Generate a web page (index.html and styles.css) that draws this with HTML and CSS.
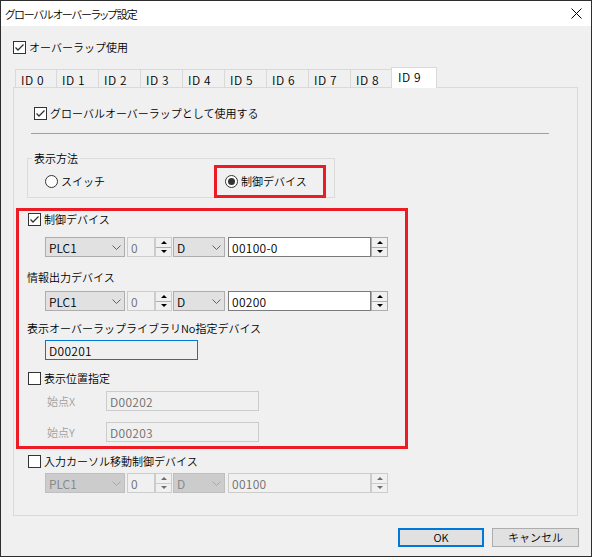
FILE: index.html
```html
<!DOCTYPE html>
<html lang="ja">
<head>
<meta charset="utf-8">
<title>グローバルオーバーラップ設定</title>
<link rel="stylesheet" href="styles.css">
</head>
<body>
<div class="window">
  <div class="titlebar">
    <span class="title">グローバルオーバーラップ設定</span>
    <svg class="close" width="11" height="11" viewBox="0 0 11 11"><path d="M0.5 0.5 L10.5 10.5 M10.5 0.5 L0.5 10.5" stroke="#000" stroke-width="1" fill="none"/></svg>
  </div>
  <div class="client">
    <div class="check top-check"><span class="box"><svg width="11" height="11" viewBox="0 0 11 11"><path d="M1.5 5.5 L4 8 L9.5 2.5" fill="none" stroke="#333" stroke-width="1.3"/></svg></span><span>オーバーラップ使用</span></div>
    <div class="tabs">
      <span class="tab">ID 0</span>
      <span class="tab">ID 1</span>
      <span class="tab">ID 2</span>
      <span class="tab">ID 3</span>
      <span class="tab">ID 4</span>
      <span class="tab">ID 5</span>
      <span class="tab">ID 6</span>
      <span class="tab">ID 7</span>
      <span class="tab">ID 8</span>
      <span class="tab active">ID 9</span>
    </div>
    <div class="panel">
      <div class="check g-check"><span class="box"><svg width="11" height="11" viewBox="0 0 11 11"><path d="M1.5 5.5 L4 8 L9.5 2.5" fill="none" stroke="#333" stroke-width="1.3"/></svg></span><span>グローバルオーバーラップとして使用する</span></div>
      <div class="sep"></div>
      <fieldset class="group">
        <legend>表示方法</legend>
        <div class="radio-row">
          <div class="radio"><span class="circle"></span><span>スイッチ</span></div>
          <div class="radio hl"><span class="circle on"></span><span>制御デバイス</span></div>
        </div>
      </fieldset>
      <div class="redbox">
        <div class="check c-check"><span class="box"><svg width="11" height="11" viewBox="0 0 11 11"><path d="M1.5 5.5 L4 8 L9.5 2.5" fill="none" stroke="#333" stroke-width="1.3"/></svg></span><span>制御デバイス</span></div>
        <div class="dev-row row1">
          <div class="combo"><span>PLC1</span><svg width="9" height="5" viewBox="0 0 9 5"><path d="M0.5 0.5 L4.5 4.5 L8.5 0.5" fill="none" stroke="#606060"/></svg></div>
          <div class="edit num dis">0</div>
          <div class="updown"><span><i class="tri-up"></i></span><span><i class="tri-down"></i></span></div>
          <div class="combo d"><span>D</span><svg width="9" height="5" viewBox="0 0 9 5"><path d="M0.5 0.5 L4.5 4.5 L8.5 0.5" fill="none" stroke="#606060"/></svg></div>
          <div class="edit addr">00100-0</div>
          <div class="updown"><span><i class="tri-up"></i></span><span><i class="tri-down"></i></span></div>
        </div>
        <div class="label info-label">情報出力デバイス</div>
        <div class="dev-row row2">
          <div class="combo"><span>PLC1</span><svg width="9" height="5" viewBox="0 0 9 5"><path d="M0.5 0.5 L4.5 4.5 L8.5 0.5" fill="none" stroke="#606060"/></svg></div>
          <div class="edit num dis">0</div>
          <div class="updown"><span><i class="tri-up"></i></span><span><i class="tri-down"></i></span></div>
          <div class="combo d"><span>D</span><svg width="9" height="5" viewBox="0 0 9 5"><path d="M0.5 0.5 L4.5 4.5 L8.5 0.5" fill="none" stroke="#606060"/></svg></div>
          <div class="edit addr">00200</div>
          <div class="updown"><span><i class="tri-up"></i></span><span><i class="tri-down"></i></span></div>
        </div>
        <div class="label lib-label">表示オーバーラップライブラリNo指定デバイス</div>
        <div class="field focus">D00201</div>
        <div class="check p-check"><span class="box"></span><span>表示位置指定</span></div>
        <div class="pos-row px">
          <span class="pos-label">始点X</span>
          <div class="field dis">D00202</div>
        </div>
        <div class="pos-row py">
          <span class="pos-label">始点Y</span>
          <div class="field dis">D00203</div>
        </div>
      </div>
      <div class="check k-check"><span class="box"></span><span>入力カーソル移動制御デバイス</span></div>
      <div class="dev-row row3 disabled">
        <div class="combo"><span>PLC1</span><svg width="9" height="5" viewBox="0 0 9 5"><path d="M0.5 0.5 L4.5 4.5 L8.5 0.5" fill="none" stroke="#a8a8a8"/></svg></div>
        <div class="edit num dis">0</div>
        <div class="updown"><span><i class="tri-up"></i></span><span><i class="tri-down"></i></span></div>
        <div class="combo d"><span>D</span><svg width="9" height="5" viewBox="0 0 9 5"><path d="M0.5 0.5 L4.5 4.5 L8.5 0.5" fill="none" stroke="#a8a8a8"/></svg></div>
        <div class="edit addr dis">00100</div>
        <div class="updown"><span><i class="tri-up"></i></span><span><i class="tri-down"></i></span></div>
      </div>
    </div>
    <div class="buttons">
      <div class="btn default">OK</div>
      <div class="btn">キャンセル</div>
    </div>
  </div>
</div>
</body>
</html>
```

FILE: styles.css
```css
* { box-sizing: border-box; }
html, body { margin: 0; padding: 0; }
body {
  width: 592px;
  height: 557px;
  overflow: hidden;
  background: #f0f0f0;
  font-family: "Noto Sans CJK JP", "Noto Sans", sans-serif;
  font-size: 11px;
  font-weight: 350;
  line-height: 13px;
  color: #000;
}
.window {
  width: 592px;
  height: 557px;
  border: 1px solid #2e2e2e;
  background: #f0f0f0;
  display: flex;
  flex-direction: column;
}
.titlebar {
  height: 25px;
  flex: 0 0 25px;
  background: #fff;
  display: flex;
  align-items: center;
  justify-content: space-between;
  padding: 0 9px 0 4px;
}
.title {
  font-size: 11px;
  font-feature-settings: "palt";
  letter-spacing: -0.9px;
  line-height: 16px;
}
.client {
  flex: 1;
  padding: 0 12px;
}

/* checkbox */
.check {
  display: flex;
  align-items: center;
  gap: 3px;
  height: 13px;
  white-space: nowrap;
}
.box {
  width: 13px;
  height: 13px;
  flex: 0 0 13px;
  border: 1px solid #333;
  background: #fff;
  display: block;
}
.box svg { display: block; }
.top-check { margin-top: 15px; }

/* tabs */
.tabs {
  display: flex;
  align-items: flex-end;
  height: 20px;
  margin-top: 13px;
  padding-left: 2px;
}
.tab {
  width: 43px;
  height: 18px;
  margin-left: -1px;
  border: 1px solid #d9d9d9;
  border-bottom: none;
  background: #f0f0f0;
  display: flex;
  align-items: center;
  justify-content: flex-start;
  padding: 1px 0 0 5px;
  font-size: 12px;
  letter-spacing: 0.6px;
  white-space: nowrap;
}
.tab:first-child { margin-left: 0; width: 42px; }
.tab.active {
  width: 46px;
  height: 21px;
  margin-left: -2px;
  margin-bottom: -1px;
  background: #fff;
  position: relative;
  z-index: 1;
  padding: 0 0 3px 6px;
}

/* panel */
.panel {
  width: 565px;
  height: 429px;
  border: 1px solid #d9d9d9;
  background: #f0f0f0;
}
.g-check { margin: 19px 0 0 20px; }
.sep {
  margin: 13px 0 0 17px;
  width: 518px;
  height: 1px;
  background: #a0a0a0;
}
.group {
  margin: 17px 0 0 13px;
  padding: 0;
  width: 308px;
  border: 1px solid #dcdcdc;
  min-width: 0;
}
.group legend {
  margin-left: 4px;
  padding: 0 2px;
  line-height: 14px;
  font-size: 11px;
}
.radio-row {
  display: flex;
  align-items: center;
  justify-content: space-between;
  padding: 0 8px 0 17px;
  height: 32px;
}
.radio {
  display: flex;
  align-items: center;
  gap: 3px;
  white-space: nowrap;
}
.circle {
  width: 13px;
  height: 13px;
  border: 1px solid #333;
  border-radius: 50%;
  background: #fff;
  display: flex;
  align-items: center;
  justify-content: center;
}
.circle.on::after {
  content: "";
  width: 7px;
  height: 7px;
  border-radius: 50%;
  background: #333;
}
.radio.hl {
  width: 112px;
  height: 33px;
  margin-bottom: -1px;
  align-self: flex-start;
  border: 3px solid #ed1c24;
  padding-left: 8px;
  position: relative;
  z-index: 1;
}

/* red box */
.redbox {
  margin: 10px 0 0 2px;
  width: 392px;
  border: 3px solid #ed1c24;
  padding-bottom: 4px;
}
.c-check { margin: 2px 0 0 9px; }
.dev-row {
  display: flex;
  height: 20px;
}
.row1 { margin: 11px 0 0 26px; }
.row2 { margin: 7px 0 0 26px; }
.label { white-space: nowrap; }
.info-label { margin: 14px 0 0 8px; }
.lib-label { margin: 11px 0 0 8px; }

.combo {
  width: 80px;
  height: 20px;
  border: 1px solid #adadad;
  background: #e1e1e1;
  display: flex;
  align-items: center;
  justify-content: space-between;
  padding: 0 3px 0 3px;
  margin-right: 1px;
  font-size: 12px;
}
.combo svg { display: block; }
.combo.d { width: 52px; margin-left: 1px; margin-right: 3px; }
.edit {
  height: 20px;
  border: 1px solid #7a7a7a;
  background: #fff;
  display: flex;
  align-items: center;
  padding-left: 3px;
  font-size: 12px;
  letter-spacing: 0.3px;
}
.edit.num { width: 28px; margin-left: 1px; }
.edit.addr { width: 143px; }
.edit.dis {
  border-color: #cccccc;
  background: #f0f0f0;
  color: #6d6d6d;
}
.updown {
  width: 17px;
  height: 20px;
  display: flex;
  flex-direction: column;
  border: 1px solid #adadad;
  background: #f0f0f0;
}
.updown span {
  flex: 1;
  display: flex;
  align-items: center;
  justify-content: center;
}
.updown span + span { border-top: 1px solid #adadad; }
.tri-up {
  width: 0;
  height: 0;
  border-left: 3px solid transparent;
  border-right: 3px solid transparent;
  border-bottom: 3px solid #000;
}
.tri-down {
  width: 0;
  height: 0;
  border-left: 3px solid transparent;
  border-right: 3px solid transparent;
  border-top: 3px solid #000;
}
.row1 .updown:nth-child(3), .row2 .updown:nth-child(3) { border-color: #cccccc; }

.field {
  width: 153px;
  height: 20px;
  border: 1px solid #cccccc;
  background: #f0f0f0;
  display: flex;
  align-items: center;
  padding-left: 3px;
  font-size: 12px;
  letter-spacing: 0.3px;
}
.field.focus {
  margin: 5px 0 0 26px;
  border-color: #0078d7;
}
.field.dis { color: #6d6d6d; }
.p-check { margin: 12px 0 0 9px; }
.pos-row {
  display: flex;
  align-items: center;
  margin-left: 28px;
}
.px { margin-top: 6px; }
.py { margin-top: 11px; }
.pos-label {
  width: 59px;
  color: #a0a0a0;
}

.k-check { margin: 6px 0 0 14px; }
.row3 { margin: 5px 0 0 31px; }
.disabled .combo {
  background: #cccccc;
  border-color: #bfbfbf;
  color: #838383;
}
.disabled .updown { border-color: #cccccc; }
.disabled .updown span + span { border-top-color: #cccccc; }
.disabled .tri-up { border-bottom-color: #6d6d6d; }
.disabled .tri-down { border-top-color: #6d6d6d; }

/* buttons */
.buttons {
  display: flex;
  justify-content: flex-end;
  gap: 8px;
  margin-top: 12px;
}
.btn {
  width: 87px;
  height: 19px;
  border: 1px solid #adadad;
  background: #e1e1e1;
  display: flex;
  align-items: center;
  justify-content: center;
  white-space: nowrap;
}
.btn.default {
  width: 86px;
  border: 2px solid #0078d7;
}
```
